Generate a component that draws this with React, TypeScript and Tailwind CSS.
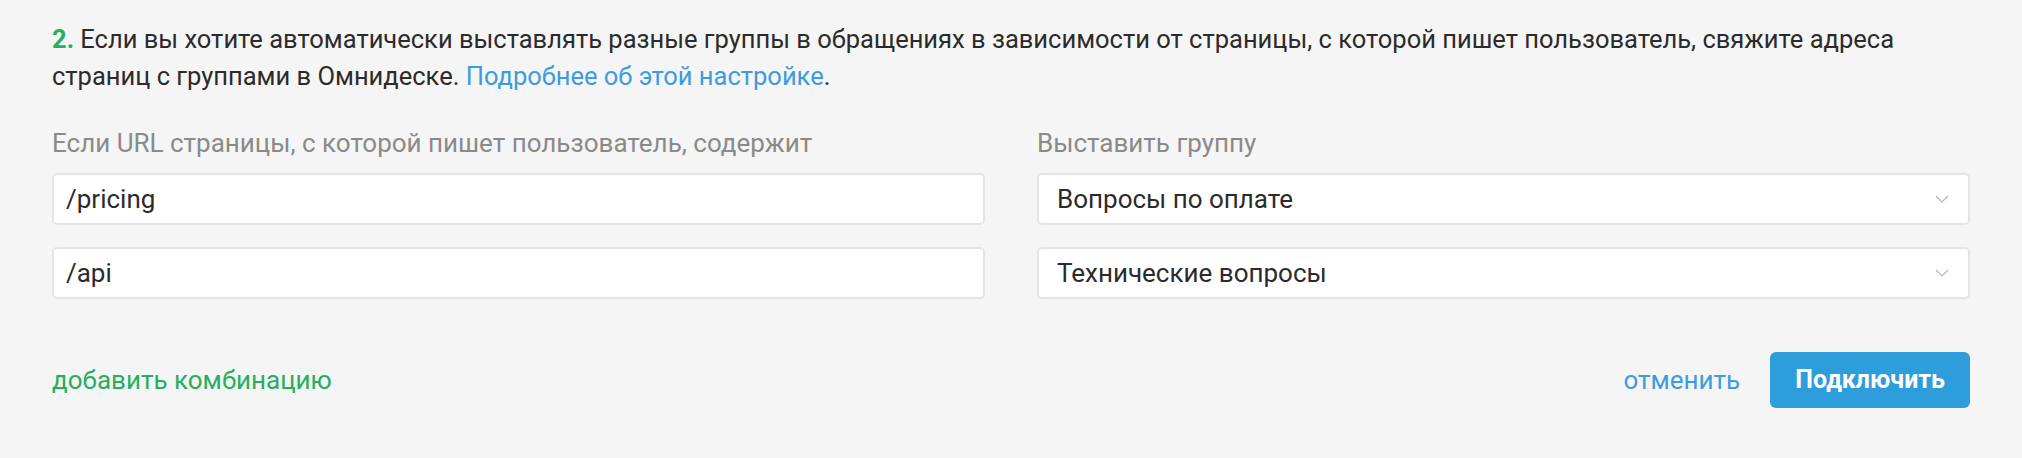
import React from "react";

const Chevron = () => (
  <svg width="14" height="8" viewBox="0 0 14 8" fill="none" className="shrink-0">
    <path d="M1 1 L7 7 L13 1" stroke="#b5b5b5" strokeWidth="1.2" />
  </svg>
);

export default function App() {
  return (
    <div
      className="w-[2022px] h-[458px] bg-[#f5f5f5] px-[52px] pt-[21px] text-[#2b2b2b]"
      style={{ fontFamily: "Roboto, 'Liberation Sans', sans-serif" }}
    >
      <p className="text-[25.5px] leading-[37px]">
        <span className="font-bold text-[#27ae60]">2.</span> Если вы хотите автоматически выставлять разные группы в обращениях в зависимости от страницы, с которой пишет пользователь, свяжите адреса
        <br />
        страниц с группами в Омнидеске.{" "}
        <a className="text-[#3d9be0]">Подробнее об этой настройке</a>.
      </p>

      <div className="grid grid-cols-2 gap-x-[52px] mt-[35px]">
        <div className="text-[26px] leading-[26px] text-[#8a8a8a]">
          Если URL страницы, с которой пишет пользователь, содержит
        </div>
        <div className="text-[26px] leading-[26px] text-[#8a8a8a]">Выставить группу</div>
      </div>

      <div className="grid grid-cols-2 gap-x-[52px] gap-y-[22px] mt-[17px]">
        <div className="h-[52px] bg-white border-2 border-[#e4e4e4] rounded-[5px] flex items-center pl-[12px] text-[26px]">
          /pricing
        </div>
        <div className="h-[52px] bg-white border-2 border-[#e4e4e4] rounded-[5px] flex items-center justify-between pl-[18px] pr-[19px] text-[26px]">
          <span>Вопросы по оплате</span>
          <Chevron />
        </div>
        <div className="h-[52px] bg-white border-2 border-[#e4e4e4] rounded-[5px] flex items-center pl-[12px] text-[26px]">
          /api
        </div>
        <div className="h-[52px] bg-white border-2 border-[#e4e4e4] rounded-[5px] flex items-center justify-between pl-[18px] pr-[19px] text-[26px]">
          <span>Технические вопросы</span>
          <Chevron />
        </div>
      </div>

      <div className="flex items-center justify-between mt-[53px]">
        <a className="text-[26px] text-[#27ae60]">добавить комбинацию</a>
        <div className="flex items-center gap-[30px]">
          <a className="text-[26px] text-[#3d9be0]">отменить</a>
          <button className="h-[56px] px-[25px] rounded-[6px] bg-[#2e9ddb] text-white font-bold text-[25px]">
            Подключить
          </button>
        </div>
      </div>
    </div>
  );
}
